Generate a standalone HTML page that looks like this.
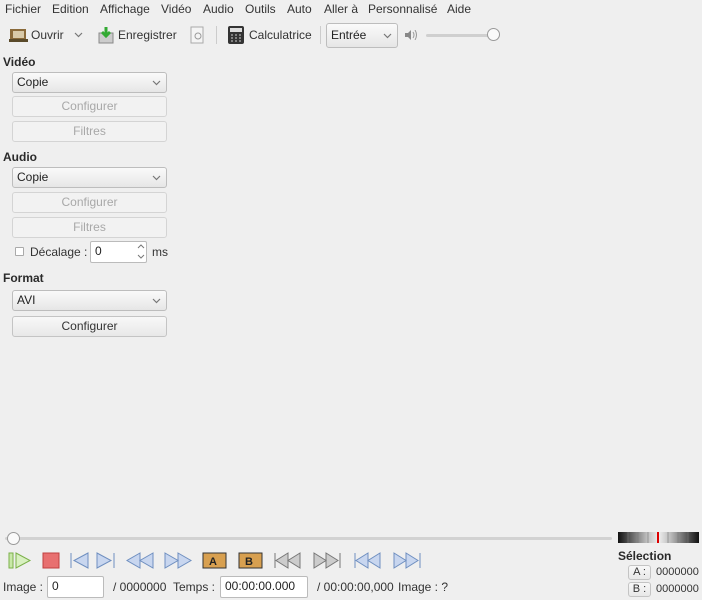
<!DOCTYPE html>
<html><head><meta charset="utf-8"><style>
*{box-sizing:border-box;margin:0;padding:0}
body{width:702px;height:600px;background:#efefef;font-family:"Liberation Sans",sans-serif;font-size:12px;color:#333;position:relative;overflow:hidden}
.a{position:absolute;white-space:nowrap}
.b{font-weight:bold;color:#2a2a2a}
.btn{position:absolute;border:1px solid #c4c4c4;border-radius:3px;background:linear-gradient(#f8f8f8,#e8e8e8);text-align:center;line-height:19px}
.dis{color:#a8a8a8;background:#f2f2f2;border-color:#d4d4d4}
.combo{position:absolute;border:1px solid #bdbdbd;border-radius:3px;background:linear-gradient(#fafafa,#e6e6e6);padding-left:4px;line-height:19px;color:#222}
.combo svg{position:absolute;right:5px;top:50%;margin-top:-3px}
.inp{position:absolute;border:1px solid #bbb;border-radius:2px;background:#fff;padding-left:4px;line-height:19px;color:#222}
</style></head><body>
<div class="a" style="top:2px;left:5px">Fichier</div>
<div class="a" style="top:2px;left:52px">Edition</div>
<div class="a" style="top:2px;left:100px">Affichage</div>
<div class="a" style="top:2px;left:161px">Vidéo</div>
<div class="a" style="top:2px;left:203px">Audio</div>
<div class="a" style="top:2px;left:245px">Outils</div>
<div class="a" style="top:2px;left:287px">Auto</div>
<div class="a" style="top:2px;left:324px">Aller à</div>
<div class="a" style="top:2px;left:368px">Personnalisé</div>
<div class="a" style="top:2px;left:447px">Aide</div>

<svg class="a" style="left:9px;top:27px" width="20" height="16"><rect x="1" y="2" width="16" height="11" fill="#8a6a3a"/><rect x="4" y="4" width="11" height="7" fill="#d8c9a8"/><rect x="0" y="12" width="19" height="3" fill="#5a4a2a"/></svg>
<div class="a" style="top:28px;left:31px">Ouvrir</div>
<svg class="a" style="left:74px;top:32px" width="9" height="6"><path d="M1 1l3.5 3.5L8 1" stroke="#777" fill="none" stroke-width="1.2"/></svg>
<svg class="a" style="left:98px;top:26px" width="16" height="18"><rect x="1" y="7" width="14" height="10" fill="#ccc" stroke="#888"/><path d="M8 1v9M4 6l4 4 4-4" stroke="#3a3" stroke-width="3" fill="none"/></svg>
<div class="a" style="top:28px;left:118px">Enregistrer</div>
<svg class="a" style="left:190px;top:26px" width="14" height="18"><rect x="1" y="1" width="12" height="16" fill="#f4f4f4" stroke="#aaa"/><circle cx="8" cy="10" r="3" fill="none" stroke="#999"/></svg>
<div class="a" style="left:216px;top:26px;width:1px;height:18px;background:#ccc"></div>
<svg class="a" style="left:228px;top:26px" width="16" height="18"><rect x="0" y="0" width="16" height="18" rx="2" fill="#333"/><rect x="2" y="2" width="12" height="4" fill="#ddd"/><path d="M3 9h2M7 9h2M11 9h2M3 12h2M7 12h2M11 12h2M3 15h2M7 15h2M11 15h2" stroke="#ccc"/></svg>
<div class="a" style="top:28px;left:249px">Calculatrice</div>
<div class="a" style="left:320px;top:26px;width:1px;height:18px;background:#ccc"></div>
<div class="combo" style="left:326px;top:23px;width:72px;height:25px;line-height:23px">Entrée<svg width="9" height="6"><path d="M1 1l3.5 3.5L8 1" stroke="#777" fill="none" stroke-width="1.2"/></svg></div>
<svg class="a" style="left:405px;top:30px" width="12" height="10"><path d="M0 3h3l3-3v10l-3-3H0z" fill="#888"/><path d="M8 2q2 3 0 6M10 0q3 5 0 10" stroke="#999" fill="none"/></svg>
<div class="a" style="left:426px;top:34px;width:70px;height:3px;background:#cfcfcf;border-radius:2px"></div>
<div class="a" style="left:487px;top:28px;width:13px;height:13px;border-radius:50%;background:#fafafa;border:1px solid #999"></div>

<div class="a b" style="top:55px;left:3px">Vidéo</div>
<div class="combo" style="left:12px;top:72px;width:155px;height:21px">Copie<svg width="9" height="6"><path d="M1 1l3.5 3.5L8 1" stroke="#777" fill="none" stroke-width="1.2"/></svg></div>
<div class="btn dis" style="left:12px;top:96px;width:155px;height:21px">Configurer</div>
<div class="btn dis" style="left:12px;top:121px;width:155px;height:21px">Filtres</div>
<div class="a b" style="top:150px;left:3px">Audio</div>
<div class="combo" style="left:12px;top:167px;width:155px;height:21px">Copie<svg width="9" height="6"><path d="M1 1l3.5 3.5L8 1" stroke="#777" fill="none" stroke-width="1.2"/></svg></div>
<div class="btn dis" style="left:12px;top:192px;width:155px;height:21px">Configurer</div>
<div class="btn dis" style="left:12px;top:217px;width:155px;height:21px">Filtres</div>
<div class="a" style="left:15px;top:247px;width:9px;height:9px;border:1px solid #aaa;background:#fff;border-radius:1px"></div>
<div class="a" style="top:245px;left:30px">Décalage :</div>
<div class="inp" style="left:90px;top:241px;width:57px;height:22px">0</div>
<svg class="a" style="left:137px;top:243px" width="8" height="17"><path d="M1 5l3-3 3 3M1 12l3 3 3-3" stroke="#777" fill="none"/></svg>
<div class="a" style="top:245px;left:152px">ms</div>
<div class="a b" style="top:271px;left:3px">Format</div>
<div class="combo" style="left:12px;top:290px;width:155px;height:21px">AVI<svg width="9" height="6"><path d="M1 1l3.5 3.5L8 1" stroke="#777" fill="none" stroke-width="1.2"/></svg></div>
<div class="btn" style="left:12px;top:316px;width:155px;height:21px;color:#333">Configurer</div>

<div class="a" style="left:5px;top:537px;width:607px;height:3px;background:#d2d2d2;border-radius:2px"></div>
<div class="a" style="left:7px;top:532px;width:13px;height:13px;border-radius:50%;background:#fafafa;border:1px solid #999"></div>
<svg class="a" style="left:618px;top:532px" width="81" height="11"><defs><linearGradient id="g"><stop offset="0" stop-color="#111"/><stop offset=".35" stop-color="#bbb"/><stop offset=".5" stop-color="#eee"/><stop offset=".65" stop-color="#bbb"/><stop offset="1" stop-color="#111"/></linearGradient></defs><rect width="81" height="11" fill="url(#g)"/><path d="M10 0v11M20 0v11M30 0v11M50 0v11M60 0v11M70 0v11" stroke="#777" stroke-width=".6"/><rect x="39" width="2" height="11" fill="#d00"/></svg>

<svg class="a" style="left:0;top:550px" width="430" height="22" fill="#c8d6ef" stroke="#6f8fc0">
<rect x="9" y="3" width="4" height="15" fill="#c8e8a8" stroke="#7bb04a"/><path d="M16 3l14 7.5L16 18z" fill="#d8f0c0" stroke="#7bb04a"/>
<rect x="43" y="3" width="16" height="15" fill="#e87070" stroke="#c04040"/>
<path d="M71 3v15M88 3L74 10.5 88 18z"/>
<path d="M114 3v15M97 3l14 7.5L97 18z"/>
<path d="M140 3l-13 7.5 13 7.5zM153 3l-13 7.5 13 7.5z"/>
<path d="M165 3l13 7.5-13 7.5zM178 3l13 7.5-13 7.5z"/>
<rect x="203" y="3" width="23" height="15" fill="#d8a050" stroke="#333"/><text x="209" y="15" font-size="11" font-weight="bold" fill="#222" stroke="none" font-family="Liberation Sans">A</text>
<rect x="239" y="3" width="23" height="15" fill="#d8a050" stroke="#333"/><text x="245" y="15" font-size="11" font-weight="bold" fill="#222" stroke="none" font-family="Liberation Sans">B</text>
<g fill="#ccc" stroke="#777"><path d="M275 3v15M288 3l-12 7.5 12 7.5zM300 3l-12 7.5 12 7.5z"/><path d="M340 3v15M314 3l12 7.5-12 7.5zM326 3l12 7.5-12 7.5z"/></g>
<path d="M355 3v15M368 3l-12 7.5 12 7.5zM380 3l-12 7.5 12 7.5z"/>
<path d="M420 3v15M394 3l12 7.5-12 7.5zM406 3l12 7.5-12 7.5z"/>
</svg>

<div class="a" style="top:580px;left:3px">Image :</div>
<div class="inp" style="left:47px;top:576px;width:57px;height:22px">0</div>
<div class="a" style="top:580px;left:113px">/ 0000000</div>
<div class="a" style="top:580px;left:173px">Temps :</div>
<div class="inp" style="left:220px;top:576px;width:88px;height:22px">00:00:00.000</div>
<div class="a" style="top:580px;left:317px">/ 00:00:00,000</div>
<div class="a" style="top:580px;left:398px">Image : ?</div>
<div class="a b" style="top:549px;left:618px">Sélection</div>
<div class="btn" style="left:628px;top:565px;width:23px;height:15px;line-height:13px;font-size:11px">A :</div>
<div class="a" style="top:566px;left:656px;font-size:11px">0000000</div>
<div class="btn" style="left:628px;top:582px;width:23px;height:15px;line-height:13px;font-size:11px">B :</div>
<div class="a" style="top:583px;left:656px;font-size:11px">0000000</div>
</body></html>
